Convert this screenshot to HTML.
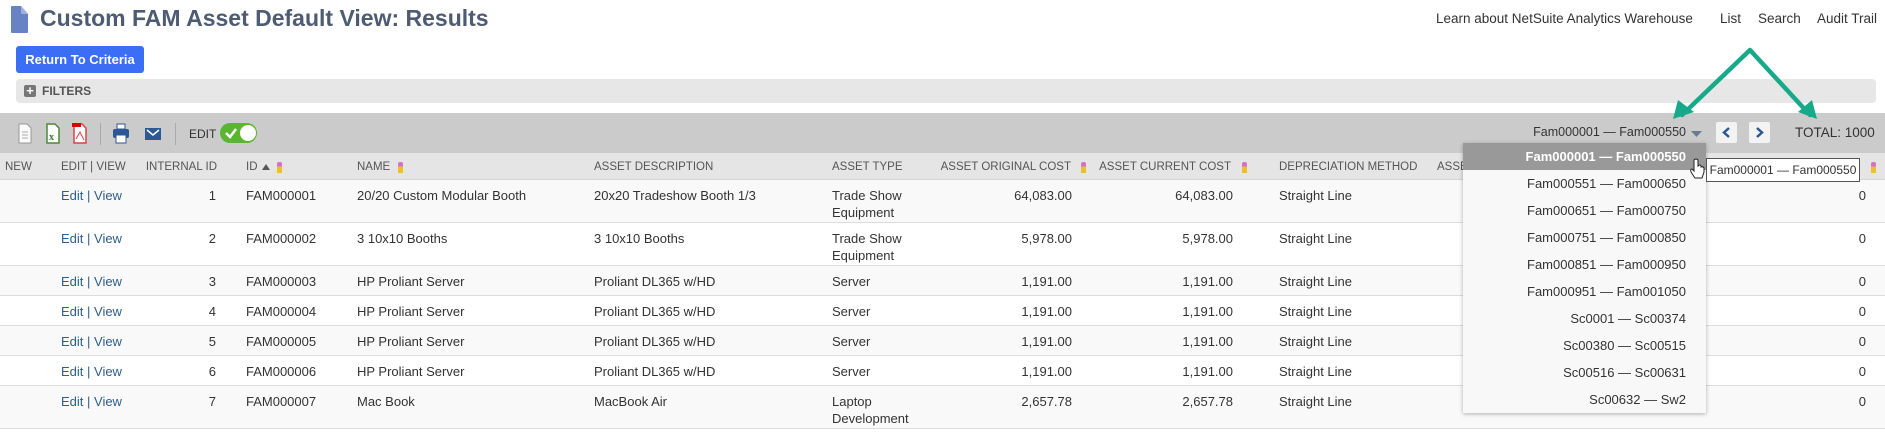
<!DOCTYPE html>
<html><head><meta charset="utf-8"><style>
*{margin:0;padding:0;box-sizing:border-box}
body{width:1885px;height:438px;overflow:hidden;background:#fff;font-family:"Liberation Sans",sans-serif;color:#333;position:relative}
.a{position:absolute;white-space:nowrap}
.h{font-size:11.5px;color:#555;top:160px;line-height:14px}
.c{font-size:13px;color:#333}
.r{text-align:right}
.lnk{color:#2f5e8c}
.pen{position:absolute;width:5px;height:11px;border-radius:2px 2px 0 0;background:linear-gradient(#d870c8 0,#d870c8 40%,#e8c030 40%);top:162px}
.dd div{height:27px;line-height:27px;text-align:right;padding-right:20px;font-size:13px;color:#333}
</style></head><body>
<svg class="a" style="left:11px;top:6px" width="17" height="27" viewBox="0 0 17 27"><path d="M0 1 Q0 0 1 0 H10 L17 8 V26 Q17 27 16 27 H1 Q0 27 0 26Z" fill="#6783c4"/><path d="M10 0 L17 8 H11 Q10 8 10 7Z" fill="#9fb1dc"/></svg>
<div class="a" style="left:40px;top:5px;font-size:23px;font-weight:bold;color:#4d5b73">Custom FAM Asset Default View: Results</div>
<div class="a c" style="left:1436px;top:11px;font-size:13.5px">Learn about NetSuite Analytics Warehouse</div>
<div class="a c" style="left:1720px;top:11px;font-size:13.5px">List</div>
<div class="a c" style="left:1758px;top:11px;font-size:13.5px">Search</div>
<div class="a c" style="left:1817px;top:11px;font-size:13.5px">Audit Trail</div>
<div class="a" style="left:16px;top:46px;width:128px;height:27px;background:#3c6ef5;border-radius:3px;color:#fff;font-size:13px;font-weight:bold;line-height:27px;text-align:center">Return To Criteria</div>
<div class="a" style="left:16px;top:79px;width:1860px;height:24px;background:#e7e7e7;border-radius:4px"></div>
<div class="a" style="left:24px;top:85px;width:12px;height:12px;background:#777;border-radius:2px;color:#fff;font-size:13px;line-height:11px;text-align:center;font-weight:bold">+</div>
<div class="a" style="left:42px;top:84px;font-size:12px;font-weight:bold;color:#555">FILTERS</div>
<div class="a" style="left:0;top:113px;width:1885px;height:40px;background:#cbcbcb"></div>
<svg class="a" style="left:17px;top:123px" width="170" height="22">
<path d="M2 1H10L14 5V20H2Z" fill="#fafafa" stroke="#999"/><path d="M5 9H11M5 12H11M5 15H11" stroke="#aaa"/>
<path d="M30 1H38L42 5V20H30Z" fill="#fff" stroke="#4a8a3a" stroke-width="1.5"/><text x="32" y="17" font-size="10" font-weight="bold" fill="#2e7a2e" font-family="Liberation Serif">x</text>
<path d="M57 1H65L69 5V20H57Z" fill="#fff" stroke="#e04040" stroke-width="1.5"/><rect x="55" y="0" width="9" height="4" fill="#d00"/><path d="M59 16 L63 9 L67 17" stroke="#e04040" fill="none"/>
<rect x="83" y="-3" width="1" height="27" fill="#aaa"/>
<path d="M100 1H108V6H100Z" fill="#fff" stroke="#2c5896"/><rect x="96" y="6" width="16" height="9" rx="2" fill="#2c5896"/><rect x="99" y="12" width="10" height="8" fill="#fff" stroke="#2c5896"/>
<rect x="128" y="5" width="16" height="12" fill="#2c5896"/><path d="M130 7L136 12L142 7" stroke="#fff" fill="none" stroke-width="1.5"/>
<rect x="158" y="-3" width="1" height="27" fill="#aaa"/>
</svg>
<div class="a" style="left:189px;top:127px;font-size:12px;color:#333">EDIT</div>
<div class="a" style="left:220px;top:123px;width:37px;height:20px;border-radius:10px;background:#5cb531"></div>
<div class="a" style="left:240px;top:125px;width:16px;height:16px;border-radius:8px;background:#fff"></div>
<svg class="a" style="left:225px;top:127px" width="12" height="12"><path d="M1 6L5 10L11 2" stroke="#fff" stroke-width="2.5" fill="none"/></svg>
<div class="a c r" style="left:1486px;width:200px;top:125px;font-size:12.5px">Fam000001 — Fam000550</div>
<svg class="a" style="left:1691px;top:131px" width="12" height="7"><path d="M0 0H11L5.5 6Z" fill="#6a7a93"/></svg>
<div class="a" style="left:1716px;top:122px;width:21px;height:21px;background:#f3f3f3;border-radius:2px"></div>
<div class="a" style="left:1749px;top:122px;width:21px;height:21px;background:#f3f3f3;border-radius:2px"></div>
<svg class="a" style="left:1716px;top:122px" width="60" height="21"><path d="M13 6L8 10.5L13 15" stroke="#2c5896" stroke-width="2.5" fill="none"/><path d="M41 6L46 10.5L41 15" stroke="#2c5896" stroke-width="2.5" fill="none"/></svg>
<div class="a c" style="left:1795px;top:125px;font-size:13.5px">TOTAL: 1000</div>
<div class="a" style="left:0;top:153px;width:1885px;height:27px;background:#e5e5e5;border-bottom:1px solid #d5d5d5"></div>
<div class="a h" style="left:5px">NEW</div>
<div class="a h" style="left:61px">EDIT | VIEW</div>
<div class="a h r" style="left:140px;width:77px">INTERNAL ID</div>
<div class="a h" style="left:246px">ID</div>
<svg class="a" style="left:262px;top:164px" width="8" height="6"><path d="M0 6L4 0L8 6Z" fill="#555"/></svg>
<div class="pen" style="left:277px"></div>
<div class="a h" style="left:357px">NAME</div><div class="pen" style="left:398px"></div>
<div class="a h" style="left:594px">ASSET DESCRIPTION</div>
<div class="a h" style="left:832px">ASSET TYPE</div>
<div class="a h r" style="left:900px;width:171px">ASSET ORIGINAL COST</div><div class="pen" style="left:1081px"></div>
<div class="a h r" style="left:1060px;width:171px">ASSET CURRENT COST</div><div class="pen" style="left:1242px"></div>
<div class="a h" style="left:1279px">DEPRECIATION METHOD</div>
<div class="a h" style="left:1437px">ASSET</div>
<div class="pen" style="left:1871px"></div>
<div class="a" style="left:0;top:180px;width:1885px;height:43px;background:#f9f9f9;border-bottom:1px solid #ddd"></div>
<div class="a" style="left:0;top:223px;width:1885px;height:43px;background:#fff;border-bottom:1px solid #ddd"></div>
<div class="a" style="left:0;top:266px;width:1885px;height:30px;background:#f9f9f9;border-bottom:1px solid #ddd"></div>
<div class="a" style="left:0;top:296px;width:1885px;height:30px;background:#fff;border-bottom:1px solid #ddd"></div>
<div class="a" style="left:0;top:326px;width:1885px;height:30px;background:#f9f9f9;border-bottom:1px solid #ddd"></div>
<div class="a" style="left:0;top:356px;width:1885px;height:30px;background:#fff;border-bottom:1px solid #ddd"></div>
<div class="a" style="left:0;top:386px;width:1885px;height:43px;background:#f9f9f9;border-bottom:1px solid #ddd"></div>

<div class="a c" style="top:187px;left:0;width:1885px;line-height:17px">
<span class="a lnk" style="left:61px">Edit | View</span><span class="a r" style="left:180px;width:36px">1</span><span class="a" style="left:246px">FAM000001</span><span class="a" style="left:357px">20/20 Custom Modular Booth</span><span class="a" style="left:594px">20x20 Tradeshow Booth 1/3</span><span class="a" style="left:832px">Trade Show<br>Equipment</span><span class="a r" style="left:960px;width:112px">64,083.00</span><span class="a r" style="left:1120px;width:113px">64,083.00</span><span class="a" style="left:1279px">Straight Line</span><span class="a r" style="left:1840px;width:26px">0</span></div>
<div class="a c" style="top:230px;left:0;width:1885px;line-height:17px">
<span class="a lnk" style="left:61px">Edit | View</span><span class="a r" style="left:180px;width:36px">2</span><span class="a" style="left:246px">FAM000002</span><span class="a" style="left:357px">3 10x10 Booths</span><span class="a" style="left:594px">3 10x10 Booths</span><span class="a" style="left:832px">Trade Show<br>Equipment</span><span class="a r" style="left:960px;width:112px">5,978.00</span><span class="a r" style="left:1120px;width:113px">5,978.00</span><span class="a" style="left:1279px">Straight Line</span><span class="a r" style="left:1840px;width:26px">0</span></div>
<div class="a c" style="top:273px;left:0;width:1885px;line-height:17px">
<span class="a lnk" style="left:61px">Edit | View</span><span class="a r" style="left:180px;width:36px">3</span><span class="a" style="left:246px">FAM000003</span><span class="a" style="left:357px">HP Proliant Server</span><span class="a" style="left:594px">Proliant DL365 w/HD</span><span class="a" style="left:832px">Server</span><span class="a r" style="left:960px;width:112px">1,191.00</span><span class="a r" style="left:1120px;width:113px">1,191.00</span><span class="a" style="left:1279px">Straight Line</span><span class="a r" style="left:1840px;width:26px">0</span></div>
<div class="a c" style="top:303px;left:0;width:1885px;line-height:17px">
<span class="a lnk" style="left:61px">Edit | View</span><span class="a r" style="left:180px;width:36px">4</span><span class="a" style="left:246px">FAM000004</span><span class="a" style="left:357px">HP Proliant Server</span><span class="a" style="left:594px">Proliant DL365 w/HD</span><span class="a" style="left:832px">Server</span><span class="a r" style="left:960px;width:112px">1,191.00</span><span class="a r" style="left:1120px;width:113px">1,191.00</span><span class="a" style="left:1279px">Straight Line</span><span class="a r" style="left:1840px;width:26px">0</span></div>
<div class="a c" style="top:333px;left:0;width:1885px;line-height:17px">
<span class="a lnk" style="left:61px">Edit | View</span><span class="a r" style="left:180px;width:36px">5</span><span class="a" style="left:246px">FAM000005</span><span class="a" style="left:357px">HP Proliant Server</span><span class="a" style="left:594px">Proliant DL365 w/HD</span><span class="a" style="left:832px">Server</span><span class="a r" style="left:960px;width:112px">1,191.00</span><span class="a r" style="left:1120px;width:113px">1,191.00</span><span class="a" style="left:1279px">Straight Line</span><span class="a r" style="left:1840px;width:26px">0</span></div>
<div class="a c" style="top:363px;left:0;width:1885px;line-height:17px">
<span class="a lnk" style="left:61px">Edit | View</span><span class="a r" style="left:180px;width:36px">6</span><span class="a" style="left:246px">FAM000006</span><span class="a" style="left:357px">HP Proliant Server</span><span class="a" style="left:594px">Proliant DL365 w/HD</span><span class="a" style="left:832px">Server</span><span class="a r" style="left:960px;width:112px">1,191.00</span><span class="a r" style="left:1120px;width:113px">1,191.00</span><span class="a" style="left:1279px">Straight Line</span><span class="a r" style="left:1840px;width:26px">0</span></div>
<div class="a c" style="top:393px;left:0;width:1885px;line-height:17px">
<span class="a lnk" style="left:61px">Edit | View</span><span class="a r" style="left:180px;width:36px">7</span><span class="a" style="left:246px">FAM000007</span><span class="a" style="left:357px">Mac Book</span><span class="a" style="left:594px">MacBook Air</span><span class="a" style="left:832px">Laptop<br>Development</span><span class="a r" style="left:960px;width:112px">2,657.78</span><span class="a r" style="left:1120px;width:113px">2,657.78</span><span class="a" style="left:1279px">Straight Line</span><span class="a r" style="left:1840px;width:26px">0</span></div>
<div class="a dd" style="left:1463px;top:143px;width:243px;height:270px;background:#f8f8f8;box-shadow:0 1px 4px rgba(0,0,0,.3)">
<div style="background:#999;color:#fff;font-weight:bold">Fam000001 — Fam000550</div>
<div>Fam000551 — Fam000650</div><div>Fam000651 — Fam000750</div><div>Fam000751 — Fam000850</div><div>Fam000851 — Fam000950</div><div>Fam000951 — Fam001050</div><div>Sc0001 — Sc00374</div><div>Sc00380 — Sc00515</div><div>Sc00516 — Sc00631</div><div>Sc00632 — Sw2</div>
</div>
<div class="a c" style="left:1706px;top:158px;width:154px;height:24px;background:#fff;border:1px solid #555;line-height:22px;text-align:center;font-size:12px">Fam000001 — Fam000550</div>
<svg class="a" style="left:1689px;top:158px" width="16" height="22"><path d="M5 2V13L3 11Q1 11 2 14L6 20H13L15 14V10Q14 8 12 9V8Q11 6 9 8V2Q7 0 5 2Z" fill="#fff" stroke="#222"/></svg>
<svg class="a" style="left:1660px;top:40px" width="170" height="90">
<path d="M90 10L22 75M90 10L150 75" stroke="#17a98a" stroke-width="4.5" fill="none" stroke-linecap="round"/>
<path d="M13 79L18 60L34 72Z" fill="#17a98a"/><path d="M157 79L138 72L152 60Z" fill="#17a98a"/>
</svg>
</body></html>
